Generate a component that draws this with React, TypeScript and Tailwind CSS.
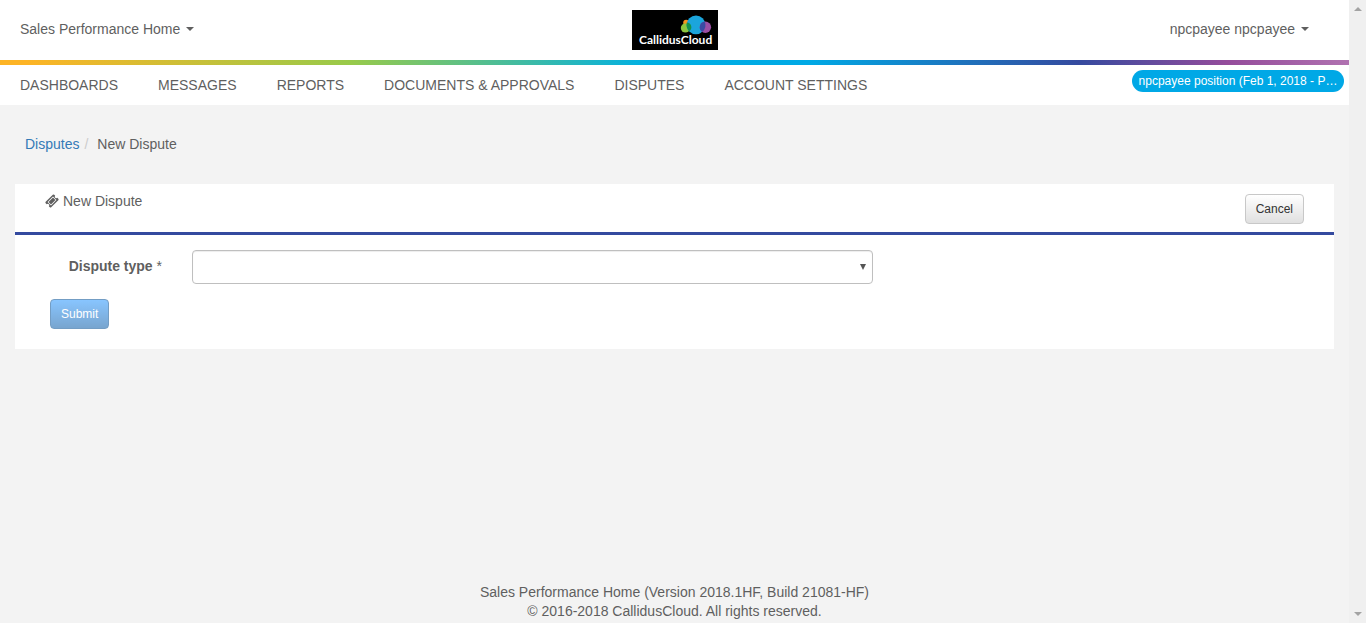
const navItems = [
  'DASHBOARDS',
  'MESSAGES',
  'REPORTS',
  'DOCUMENTS & APPROVALS',
  'DISPUTES',
  'ACCOUNT SETTINGS',
];

function Caret() {
  return (
    <svg viewBox="0 0 8 4" className="h-1 w-2 shrink-0" fill="currentColor" aria-hidden="true">
      <path d="M0 0h8L4 4z" />
    </svg>
  );
}

function Logo() {
  return (
    <svg viewBox="0 0 86 40" className="h-10 w-[86px] shrink-0" role="img" aria-label="CallidusCloud">
      <rect width="86" height="40" fill="#000" />
      <circle cx="54.2" cy="12.8" r="3" fill="#f7941e" />
      <circle cx="53.4" cy="18" r="4.6" fill="#8dc63f" />
      <circle cx="64" cy="14.9" r="9.4" fill="#1ba5dc" />
      <path d="M54.8 12.6a9.4 9.4 0 0 0 2.2 8.6 4.6 4.6 0 0 0-2.2-8.6z" fill="#15924b" />
      <circle cx="73.4" cy="17.2" r="5.7" fill="#9b4fa5" />
      <path d="M72.8 11.6a9.4 9.4 0 0 1-2.5 10.4 5.7 5.7 0 0 1 2.5-10.4z" fill="#3b4ba3" />
      <text x="7" y="33.6" fill="#fff" fontSize="12" fontWeight="700" fontFamily="Lato, sans-serif">
        CallidusCloud
      </text>
    </svg>
  );
}

function TicketIcon() {
  return (
    <svg viewBox="0 0 1792 1792" className="size-3.5 shrink-0" fill="currentColor" aria-hidden="true">
      <path d="M1024 452l316 316-572 572-316-316zm-211 979l618-618q19-19 19-45t-19-45l-362-362q-18-18-45-18t-45 18l-618 618q-19 19-19 45t19 45l362 362q18 18 45 18t45-18zm889-637l-907 908q-37 37-90.5 37t-90.5-37l-126-126q56-56 56-136t-56-136-136-56-136 56l-125-126q-37-37-37-90.5t37-90.5l907-906q37-37 90.5-37t90.5 37l125 125q-56 56-56 136t56 136 136 56 136-56l126 125q37 37 37 90.5t-37 90.5z" />
    </svg>
  );
}

function ScrollTrack() {
  return (
    <div className="flex w-[17px] shrink-0 flex-col items-center justify-between bg-[#f0f0f0] py-[7px] text-[#a3a3a3]" aria-hidden="true">
      <svg viewBox="0 0 8 4" className="h-1 w-2" fill="currentColor">
        <path d="M0 4h8L4 0z" />
      </svg>
      <Caret />
    </div>
  );
}

export default function App() {
  return (
    <div className="flex min-h-screen bg-[#f3f3f3] font-['Liberation_Sans',Arial,sans-serif] text-sm leading-5 text-[#5f5f5f]">
      <div className="flex min-w-0 flex-1 flex-col">
        <header className="bg-white">
          <div className="grid h-[60px] grid-cols-[1fr_auto_1fr] items-center px-5">
            <button type="button" className="flex items-center gap-1.5 justify-self-start pb-0.5">
              Sales Performance Home
              <Caret />
            </button>
            <Logo />
            <button type="button" className="flex items-center gap-1.5 justify-self-end pr-5 pb-0.5">
              npcpayee npcpayee
              <Caret />
            </button>
          </div>
          <div className="h-[5px] bg-[linear-gradient(to_right,#fdb425_0%,#fdb425_2%,#98ca4a_26%,#00b0e4_48%,#00a9e5_60%,#354a9f_80%,#954c9b_91%,#b072b0_100%)]" />
          <div className="flex h-10 items-start justify-between pr-[5px] pl-5">
            <nav className="flex gap-10 pt-2.5">
              {navItems.map((item) => (
                <a key={item} href="#" className="whitespace-nowrap">
                  {item}
                </a>
              ))}
            </nav>
            <button
              type="button"
              className="mt-[5px] h-[22px] w-[212px] rounded-full bg-[#00a8e6] text-center text-xs whitespace-nowrap text-white"
            >
              npcpayee position (Feb 1, 2018 - P…
            </button>
          </div>
        </header>

        <main className="flex-1 px-[15px] pt-[29px]">
          <nav aria-label="Breadcrumb" className="px-2.5">
            <ol className="flex">
              <li>
                <a href="#" className="text-[#337ab7]">Disputes</a>
              </li>
              <li aria-hidden="true" className="px-[5px] text-[#ccc]">/</li>
              <li className="pl-1">New Dispute</li>
            </ol>
          </nav>

          <section className="mt-[30px] bg-white">
            <div className="flex h-[51px] items-start justify-between border-b-3 border-[#344a9f] px-[30px]">
              <h1 className="flex items-center gap-1 pt-[7px]">
                <TicketIcon />
                New Dispute
              </h1>
              <button
                type="button"
                className="mt-2.5 h-[30px] rounded border border-[#c8c8c8] bg-linear-to-b from-white to-[#e0e0e0] px-2.5 text-xs text-[#333]"
              >
                Cancel
              </button>
            </div>
            <form className="px-[35px] pt-[15px] pb-5" onSubmit={(event) => event.preventDefault()}>
              <div className="flex items-center">
                <label htmlFor="dispute-type" className="w-28 shrink-0 pb-0.5 text-right font-bold">
                  Dispute type <span className="font-normal">*</span>
                </label>
                <div className="relative ml-[30px] w-[54.5%] min-w-40">
                  <select
                    id="dispute-type"
                    className="block h-[34px] w-full appearance-none rounded border border-[#bfbfbf] bg-white px-3 shadow-[inset_0_1px_1px_rgba(0,0,0,0.075)]"
                  />
                  <svg viewBox="0 0 6 6" className="pointer-events-none absolute top-3.5 right-[7px] size-1.5" fill="#555" aria-hidden="true">
                    <path d="M0 0h6L3 6z" />
                  </svg>
                </div>
              </div>
              <button
                type="submit"
                className="mt-[15px] h-[30px] rounded border border-[#739dc4] bg-linear-to-b from-[#88c5ff] to-[#78a5cf] px-2.5 text-xs text-white"
              >
                Submit
              </button>
            </form>
          </section>
        </main>

        <footer className="pb-0.5 text-center leading-[19px]">
          <p>Sales Performance Home (Version 2018.1HF, Build 21081-HF)</p>
          <p>© 2016-2018 CallidusCloud. All rights reserved.</p>
        </footer>
      </div>
      <ScrollTrack />
    </div>
  );
}
